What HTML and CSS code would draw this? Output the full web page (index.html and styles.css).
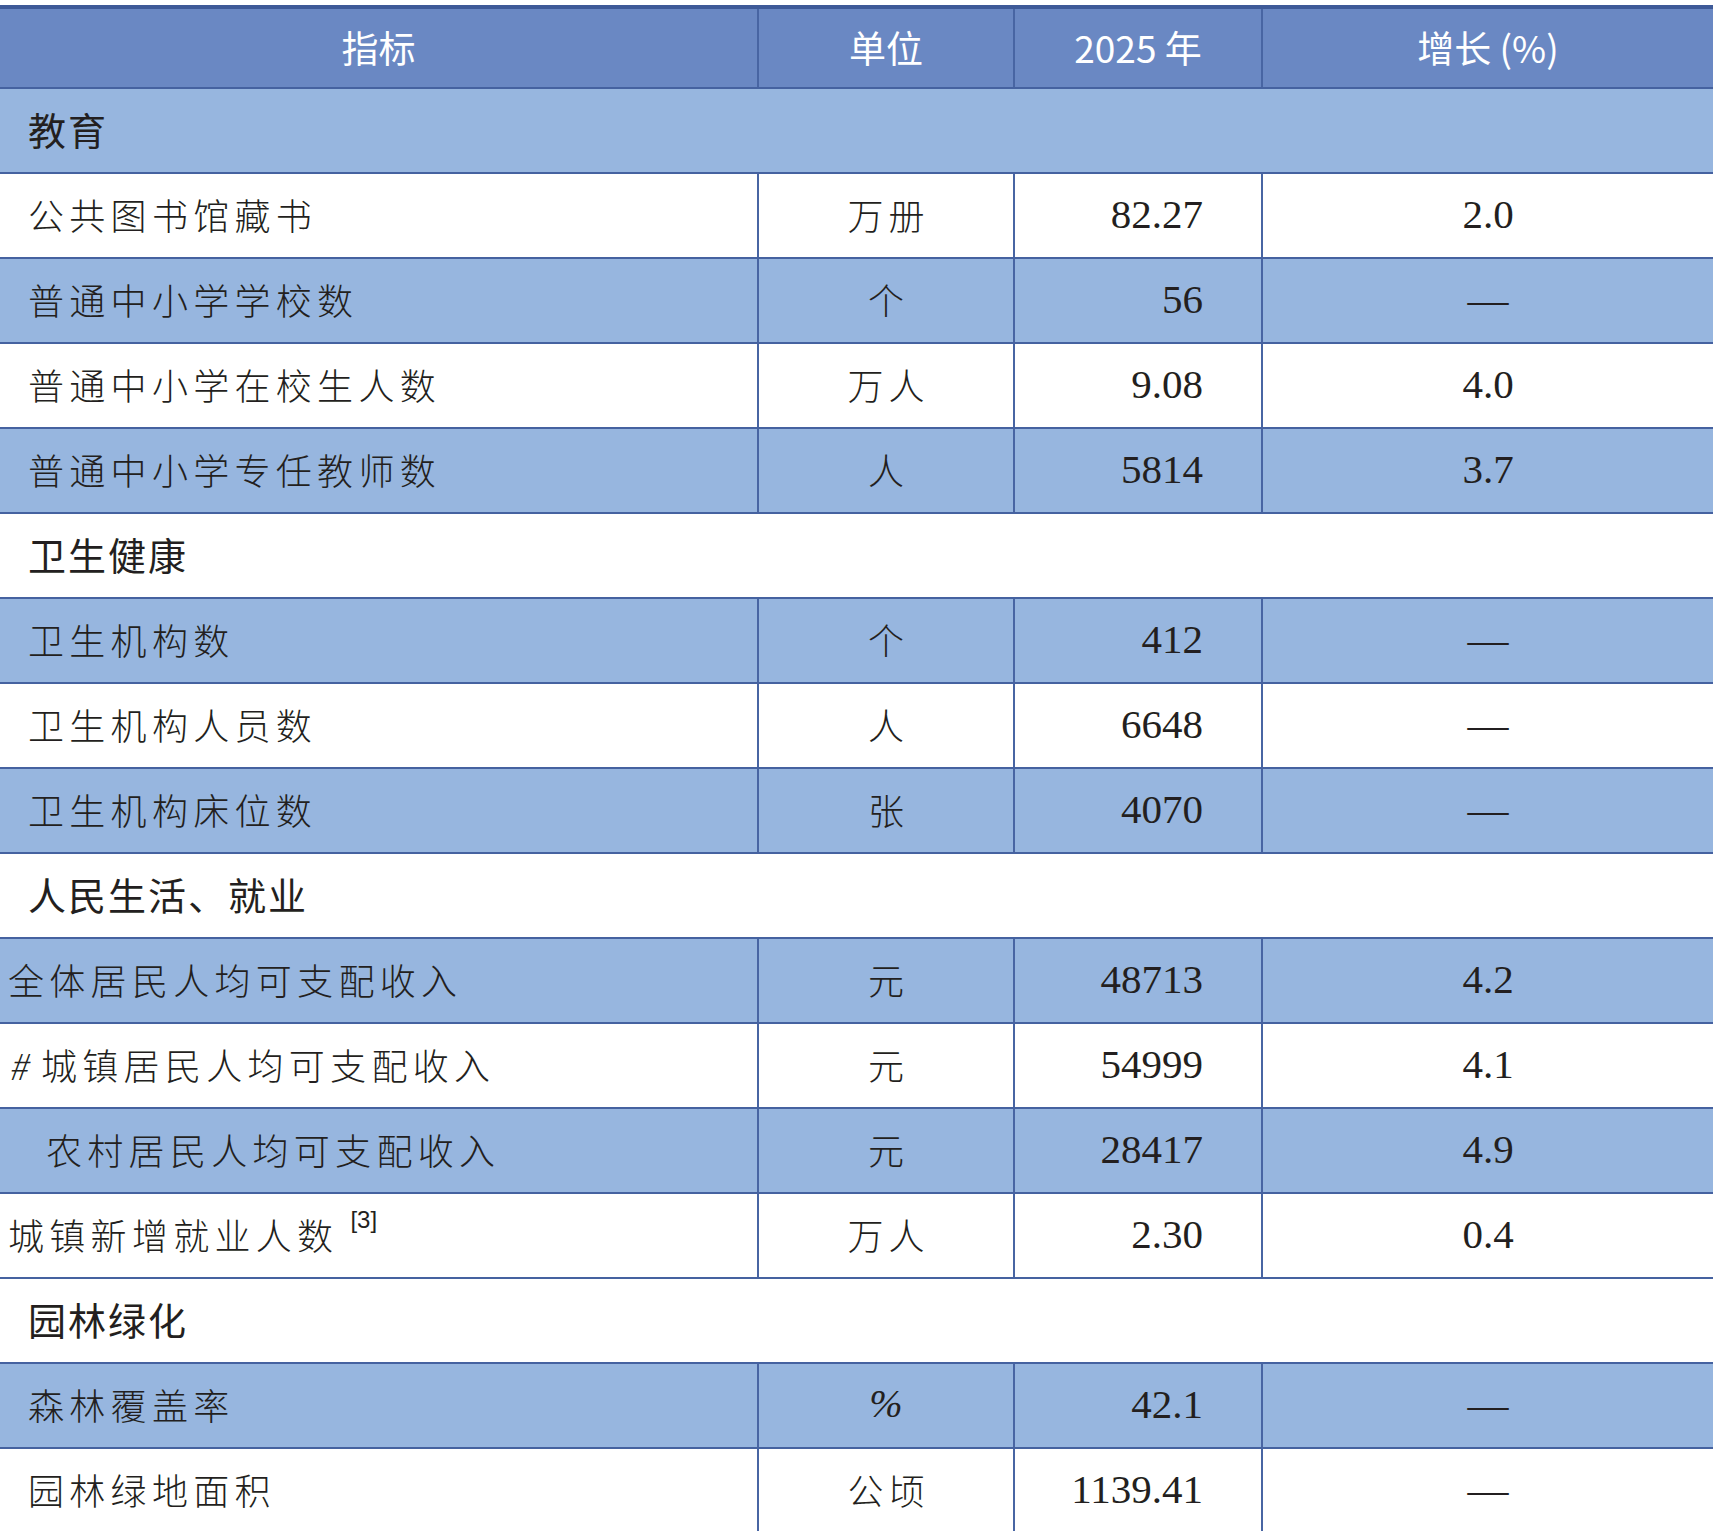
FILE: index.html
```html
<!DOCTYPE html>
<html lang="zh-CN">
<head>
<meta charset="utf-8">
<title>指标表</title>
<link rel="stylesheet" href="styles.css">
</head>
<body>
<div class="table">
  <div class="row head">
    <div class="cell c1">指标</div>
    <div class="cell c2">单位</div>
    <div class="cell c3">2025 年</div>
    <div class="cell c4">增长 (%)</div>
  </div>

  <div class="row section blue"><div class="cell">教育</div></div>
  <div class="row white">
    <div class="cell name">公共图书馆藏书</div><div class="cell unit">万册</div><div class="cell num">82.27</div><div class="cell grow">2.0</div>
  </div>
  <div class="row blue">
    <div class="cell name">普通中小学学校数</div><div class="cell unit">个</div><div class="cell num">56</div><div class="cell grow">—</div>
  </div>
  <div class="row white">
    <div class="cell name">普通中小学在校生人数</div><div class="cell unit">万人</div><div class="cell num">9.08</div><div class="cell grow">4.0</div>
  </div>
  <div class="row blue">
    <div class="cell name">普通中小学专任教师数</div><div class="cell unit">人</div><div class="cell num">5814</div><div class="cell grow">3.7</div>
  </div>

  <div class="row section white"><div class="cell">卫生健康</div></div>
  <div class="row blue">
    <div class="cell name">卫生机构数</div><div class="cell unit">个</div><div class="cell num">412</div><div class="cell grow">—</div>
  </div>
  <div class="row white">
    <div class="cell name">卫生机构人员数</div><div class="cell unit">人</div><div class="cell num">6648</div><div class="cell grow">—</div>
  </div>
  <div class="row blue">
    <div class="cell name">卫生机构床位数</div><div class="cell unit">张</div><div class="cell num">4070</div><div class="cell grow">—</div>
  </div>

  <div class="row section white"><div class="cell">人民生活、就业</div></div>
  <div class="row blue">
    <div class="cell name flush">全体居民人均可支配收入</div><div class="cell unit">元</div><div class="cell num">48713</div><div class="cell grow">4.2</div>
  </div>
  <div class="row white">
    <div class="cell name flush"><span class="hash">#</span>城镇居民人均可支配收入</div><div class="cell unit">元</div><div class="cell num">54999</div><div class="cell grow">4.1</div>
  </div>
  <div class="row blue">
    <div class="cell name indent">农村居民人均可支配收入</div><div class="cell unit">元</div><div class="cell num">28417</div><div class="cell grow">4.9</div>
  </div>
  <div class="row white">
    <div class="cell name flush">城镇新增就业人数<sup class="note">[3]</sup></div><div class="cell unit">万人</div><div class="cell num">2.30</div><div class="cell grow">0.4</div>
  </div>

  <div class="row section white"><div class="cell">园林绿化</div></div>
  <div class="row blue">
    <div class="cell name">森林覆盖率</div><div class="cell unit pct">%</div><div class="cell num">42.1</div><div class="cell grow">—</div>
  </div>
  <div class="row white">
    <div class="cell name">园林绿地面积</div><div class="cell unit">公顷</div><div class="cell num">1139.41</div><div class="cell grow">—</div>
  </div>
</div>
</body>
</html>
```
FILE: styles.css
```css
html, body {
  margin: 0;
  padding: 0;
  background: #ffffff;
}
body {
  width: 1713px;
  height: 1531px;
  overflow: hidden;
  font-family: "Noto Sans CJK SC", sans-serif;
  color: #231f20;
}
.table {
  padding-top: 5px;
}
.row {
  display: grid;
  grid-template-columns: 759px 256px 248px 450px;
  height: 85px;
  box-sizing: border-box;
  border-bottom: 2px solid #4562a0;
}
.row.section {
  grid-template-columns: 1fr;
}
.blue { background: #97b6df; }
.white { background: #ffffff; }
.head {
  background: #6a88c3;
  border-top: 4px solid #3e5a98;
  height: 84px;
}
.cell {
  display: flex;
  align-items: center;
  box-sizing: border-box;
  min-width: 0;
  white-space: nowrap;
  padding-bottom: 4px;
}
.row:not(.section) .cell:not(:last-child) {
  border-right: 2px solid #4865a3;
}
.head .cell {
  justify-content: center;
  color: #ffffff;
  font-size: 37px;
  font-weight: 400;
  padding-bottom: 2px;
}
.section .cell {
  padding-left: 28px;
  font-size: 38px;
  font-weight: 400;
  letter-spacing: 2px;
  color: #231f20;
}
.name {
  padding-left: 28px;
  font-size: 36px;
  font-weight: 300;
  letter-spacing: 5.3px;
}
.name.flush { padding-left: 8px; }
.name.indent { padding-left: 46px; }
.hash {
  display: inline-block;
  width: 33px;
  font-style: italic;
  letter-spacing: 0;
}
.note {
  font-family: "Liberation Sans", sans-serif;
  font-size: 24px;
  font-weight: 300;
  letter-spacing: 0;
  align-self: flex-start;
  margin-top: 14px;
  margin-left: 12px;
  line-height: 1;
}
.unit {
  justify-content: center;
  padding-left: 5px;
  font-size: 36px;
  font-weight: 300;
  letter-spacing: 5px;
}
.unit.pct {
  font-family: "Liberation Serif", serif;
  font-style: italic;
  font-size: 40px;
  letter-spacing: 0;
  padding-left: 0;
}
.num {
  justify-content: flex-end;
  padding-right: 58px;
  font-family: "Liberation Serif", serif;
  font-size: 41px;
}
.grow {
  justify-content: center;
  font-family: "Liberation Serif", serif;
  font-size: 41px;
}
```
